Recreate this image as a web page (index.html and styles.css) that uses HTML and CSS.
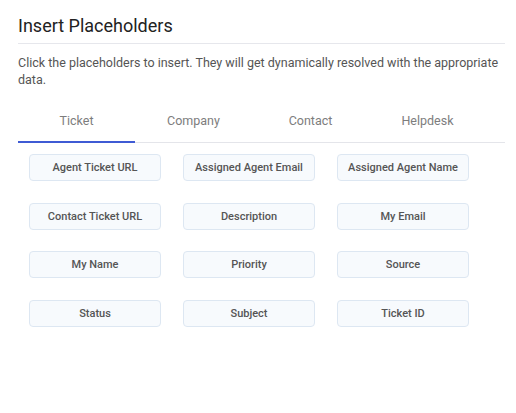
FILE: index.html
```html
<!DOCTYPE html>
<html>
<head>
<meta charset="utf-8">
<link rel="stylesheet" href="styles.css">
</head>
<body>
<div class="panel">
  <h1 class="title">Insert Placeholders</h1>
  <p class="desc">Click the placeholders to insert. They will get dynamically resolved with the appropriate data.</p>
  <div class="tabs">
    <div class="tab active">Ticket</div>
    <div class="tab">Company</div>
    <div class="tab">Contact</div>
    <div class="tab">Helpdesk</div>
  </div>
  <div class="grid">
    <button class="chip">Agent Ticket URL</button>
    <button class="chip">Assigned Agent Email</button>
    <button class="chip">Assigned Agent Name</button>
    <button class="chip">Contact Ticket URL</button>
    <button class="chip">Description</button>
    <button class="chip">My Email</button>
    <button class="chip">My Name</button>
    <button class="chip">Priority</button>
    <button class="chip">Source</button>
    <button class="chip">Status</button>
    <button class="chip">Subject</button>
    <button class="chip">Ticket ID</button>
  </div>
</div>
</body>
</html>
```
FILE: styles.css
```css
html, body {
  margin: 0;
  padding: 0;
  background: #ffffff;
}
body {
  font-family: Roboto, "Liberation Sans", sans-serif;
  color: #222;
}
.panel {
  padding: 14px 11px 0 18px;
}
.title {
  margin: 0;
  font-size: 18px;
  font-weight: 400;
  line-height: 24px;
  color: #222;
  padding-bottom: 5px;
  border-bottom: 1px solid #e6e7ec;
}
.desc {
  margin: 10px 0 0 0;
  font-size: 12.5px;
  line-height: 17px;
  color: #555;
}
.tabs {
  display: flex;
  margin-top: 24px;
  border-bottom: 1px solid #e4e5ea;
}
.tab {
  width: 117px;
  height: 31px;
  line-height: 18px;
  text-align: center;
  font-size: 12.5px;
  color: #7d7d7d;
  box-sizing: border-box;
  border-bottom: 2px solid transparent;
  margin-bottom: -1px;
}
.tab.active {
  border-bottom-color: #3f5bd4;
}
.grid {
  display: grid;
  grid-template-columns: repeat(3, 132px);
  column-gap: 22px;
  row-gap: 21.5px;
  padding: 11px 0 0 11px;
}
.chip {
  height: 27px;
  padding: 0;
  font-family: Roboto, "Liberation Sans", sans-serif;
  font-size: 11px;
  font-weight: 500;
  color: #555;
  background: #f7fafd;
  border: 1px solid #dde7f2;
  border-radius: 4px;
  text-align: center;
}
```
